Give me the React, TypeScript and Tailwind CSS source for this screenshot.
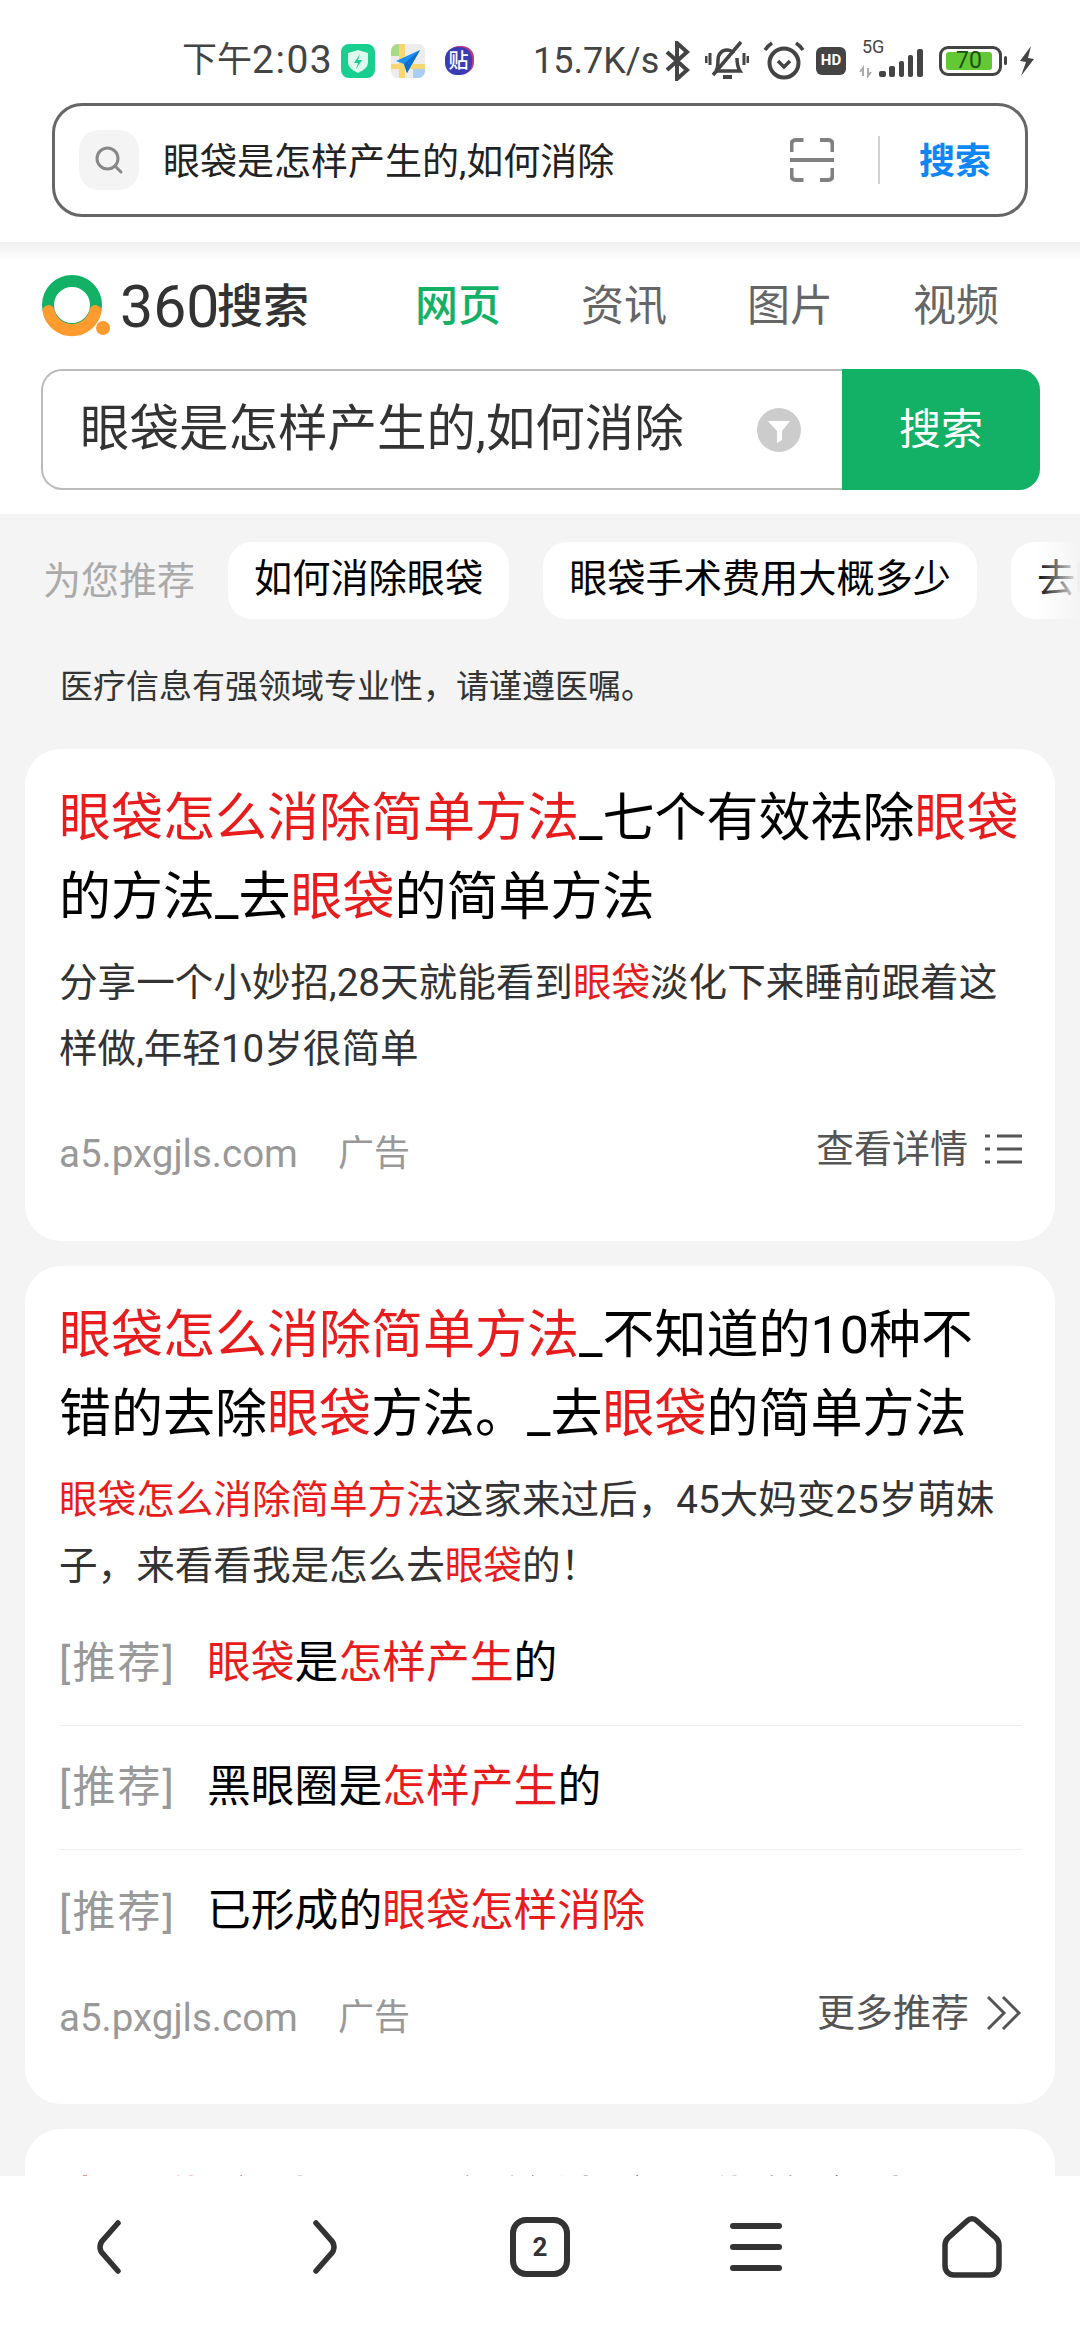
import type { ReactNode } from "react";

const font = { fontFamily: 'Roboto, "Noto Sans CJK SC", sans-serif' };

function R({ children }: { children: ReactNode }) {
  return <span className="text-[#e81c1c]">{children}</span>;
}

function StatusBar() {
  return (
    <div className="flex h-[103px] items-center pl-[182px] pt-[18px] text-[#444]">
      <span className="flex w-[149px] items-center leading-none whitespace-nowrap">
        <span className="text-[35px]">下午</span>
        <span className="text-[39px] tracking-[1.500px]">2:03</span>
      </span>
      <svg className="ml-[10px]" width="34" height="34" viewBox="0 0 34 34">
        <rect width="34" height="34" rx="8" fill="#19cf8f" />
        <path d="M17 6l10 3v9c0 5-4 8-10 11C11 26 7 23 7 18V9z" fill="#dff8ef" />
        <path d="M19 10l-6 9h4l-2 6 6-9h-4z" fill="#19cf8f" />
      </svg>
      <svg className="ml-[16px]" width="34" height="34" viewBox="0 0 34 34">
        <rect width="34" height="34" rx="7" fill="#ececec" />
        <path d="M0 7a7 7 0 0 1 7-7h6v12H0z" fill="#a6dc84" />
        <rect x="8" width="6" height="34" fill="#f7d774" />
        <rect y="20" width="34" height="5" fill="#f7d774" />
        <path d="M22 25h12v2a7 7 0 0 1-7 7h-5z" fill="#a9cdf5" />
        <path d="M29 6L5 17l8 3 3 9z" fill="#1c8ff0" />
        <path d="M29 6L13 20l3 9z" fill="#0a6fd0" />
      </svg>
      <span className="relative ml-[20px] flex h-[28px] w-[27px] items-center justify-center rounded-[12px] bg-[#3b3bb5] text-[20px] leading-none font-medium text-white shadow-[2px_-1px_0_#c2387e]">
        贴
      </span>
      <span className="ml-[61px] w-[124px] text-[36px] leading-none whitespace-nowrap">15.7K/s</span>
      <svg className="ml-[7px]" width="26" height="40" viewBox="0 0 26 40" fill="none" stroke="#444" strokeWidth="4">
        <path d="M3 11l20 18-10 9V2l10 9L3 29" />
      </svg>
      <svg className="ml-[15px]" width="44" height="42" viewBox="0 0 44 42" fill="none" stroke="#444" strokeWidth="3.5">
        <path d="M11 31c2-3 2-6 2-11 0-6 4-10 9-10 3 0 5 1 7 3M32 18c0 6 1 10 3 13H11" />
        <path d="M8 35L36 2" />
        <path d="M18 37h9" strokeWidth="4" />
        <path d="M1 16v7M5 13v12M39 13v12M43 16v7" strokeWidth="3" />
      </svg>
      <svg className="ml-[14px]" width="42" height="42" viewBox="0 0 42 42" fill="none" stroke="#444">
        <circle cx="21" cy="23" r="14.5" strokeWidth="4" />
        <path d="M15 21l6 6 6-6" strokeWidth="3.5" />
        <path d="M2 10c2-3 4-5 7-7M40 10c-2-3-4-5-7-7" strokeWidth="3.5" />
      </svg>
      <span className="ml-[11px] flex h-[28px] w-[30px] items-center justify-center rounded-[6px] bg-[#444] text-[15px] leading-none font-bold text-white">
        HD
      </span>
      <span className="relative ml-[13px] h-[34px] w-[65px]">
        <span className="absolute top-[-6px] left-[3px] text-[18px] leading-none">5G</span>
        <svg className="absolute top-0 left-0" width="65" height="34" viewBox="0 0 65 34">
          <path d="M4 32v-8l-3 4M9 24v8l3-4" fill="none" stroke="#aaa" strokeWidth="2" />
          <rect x="20" y="27" width="7" height="6" rx="2" fill="#444" />
          <rect x="30" y="22" width="6" height="11" rx="2" fill="#444" />
          <rect x="40" y="17" width="5" height="16" rx="2" fill="#444" />
          <rect x="49" y="11" width="5" height="22" rx="2" fill="#444" />
          <rect x="58" y="5" width="6" height="28" rx="2" fill="#444" />
        </svg>
      </span>
      <span className="relative ml-[15px] flex h-[30px] w-[63px] items-center rounded-[9px] border-[3px] border-[#444] pl-[4px]">
        <span className="flex h-[18px] w-[46px] items-center justify-center rounded-[3px] bg-[#62c934] text-[23px] leading-none text-[#1f4f10]">
          70
        </span>
      </span>
      <span className="ml-[2px] h-[9px] w-[3px] rounded-[2px] bg-[#444]" />
      <svg className="ml-[12px]" width="16" height="30" viewBox="0 0 16 30">
        <path d="M12 0L1 15l6 1-5 14L15 13l-6-1z" fill="#444" />
      </svg>
    </div>
  );
}

function BrowserBar() {
  return (
    <div className="h-[242px] bg-white">
      <StatusBar />
      <div className="mx-[52px] flex h-[114px] items-center rounded-[30px] border-[3px] border-[#666] pl-[24px]">
        <span className="flex h-[60px] w-[60px] items-center justify-center rounded-[20px] bg-[#f4f4f4]">
          <svg width="30" height="30" viewBox="0 0 30 30" fill="none" stroke="#888" strokeWidth="3">
            <circle cx="13.5" cy="13.5" r="10.5" />
            <path d="M21 21l6 6" strokeLinecap="round" />
          </svg>
        </span>
        <span className="ml-[24px] w-[627px] pt-[4px] text-[37px] leading-none text-[#222]">眼袋是怎样产生的,如何消除</span>
        <svg width="44" height="44" viewBox="0 0 44 44" fill="none" stroke="#808080" strokeWidth="4">
          <path d="M1.5 14V6a4 4 0 0 1 4-4h8M30 2h8.500a4 4 0 0 1 4 4v8M1.500 30v8a4 4 0 0 0 4 4h8M30 42h8.500a4 4 0 0 0 4-4v-8" />
          <path d="M0 22h44" />
        </svg>
        <span className="ml-[44px] h-[48px] w-[2px] bg-[#d0d0d0]" />
        <span className="ml-[39px] pt-[3px] text-[36px] leading-none font-bold text-[#0f86f5]">搜索</span>
      </div>
    </div>
  );
}

function Logo() {
  return (
    <div className="flex items-center">
      <svg width="72" height="64" viewBox="0 0 72 64" fill="none">
        <circle cx="31" cy="31" r="24" stroke="#13b166" strokeWidth="12" />
        <path d="M7.500 37a24 24 0 0 0 47 0" stroke="#ff9b2f" strokeWidth="12" strokeLinecap="round" />
        <circle cx="62" cy="54" r="7" fill="#ff9b2f" />
      </svg>
      <span className="ml-[7px] w-[97px] text-[59px] leading-none text-[#333]">360</span>
      <span className="text-[46px] leading-none font-medium text-[#333]">搜索</span>
    </div>
  );
}

function PageHeader() {
  return (
    <div className="h-[272px] bg-white">
      <div className="h-[18px] bg-gradient-to-b from-[#efefef] to-white" />
      <div className="flex h-[90px] items-center pt-[2px] pl-[41px]">
        <Logo />
        <div className="ml-[106px] flex gap-[80px] text-[43px] leading-none text-[#666]">
          <span className="font-medium text-[#13b166]">网页</span>
          <span>资讯</span>
          <span>图片</span>
          <span>视频</span>
        </div>
      </div>
      <div className="mt-[19px] mr-[40px] ml-[41px] flex h-[121px]">
        <div className="flex flex-1 items-center rounded-l-[21px] border-[2px] border-r-0 border-[#bbb] pl-[37px]">
          <span className="w-[677px] text-[49.500px] leading-none whitespace-nowrap text-[#333]">眼袋是怎样产生的,如何消除</span>
          <svg width="44" height="44" viewBox="0 0 44 44">
            <circle cx="22" cy="22" r="22" fill="#ccc" />
            <path d="M11 13h22l-8 10v9l-5 3V23z" fill="#fff" />
          </svg>
        </div>
        <div className="flex w-[198px] items-center justify-center rounded-r-[21px] bg-[#12b165] text-[42px] leading-none text-white">
          搜索
        </div>
      </div>
    </div>
  );
}

function Recommend() {
  const chips = ["如何消除眼袋", "眼袋手术费用大概多少", "去眼袋最有效方法"];
  return (
    <div className="relative mt-[28px] flex h-[77px] items-center overflow-hidden pl-[43px]">
      <span className="w-[185px] shrink-0 text-[38px] leading-none whitespace-nowrap text-[#aaa]">为您推荐</span>
      <div className="flex gap-[34px]">
        {chips.map((c) => (
          <span
            key={c}
            className="flex h-[77px] shrink-0 items-center rounded-[24px] bg-white px-[26px] pb-[2px] text-[38.200px] leading-none whitespace-nowrap text-black"
          >
            {c}
          </span>
        ))}
      </div>
      <div className="absolute top-0 right-0 h-full w-[44px] bg-gradient-to-r from-transparent to-[#f4f4f4]" />
    </div>
  );
}

function MetaRow({ label, icon }: { label: string; icon: ReactNode }) {
  return (
    <div className="flex h-[76px] items-center justify-between">
      <div className="flex items-center leading-none text-[#999]">
        <span className="w-[279px] text-[38.500px] whitespace-nowrap">a5.pxgjls.com</span>
        <span className="text-[36px]">广告</span>
      </div>
      <div className="flex items-center pb-[10px] text-[38px] leading-none text-[#555]">
        <span>{label}</span>
        {icon}
      </div>
    </div>
  );
}

function Card({ children, className = "" }: { children: ReactNode; className?: string }) {
  return (
    <div className={`mx-[25px] rounded-[36px] bg-white pt-[30px] pr-[33px] pl-[34px] ${className}`}>{children}</div>
  );
}

function Title({ children }: { children: ReactNode }) {
  return <h3 className="mr-[-3px] text-[52px] leading-[79px] font-normal text-black">{children}</h3>;
}

function Desc({ children }: { children: ReactNode }) {
  return <p className="mt-[13px] text-[38.600px] leading-[66px] text-[#333]">{children}</p>;
}

function RecRow({ children, last }: { children: ReactNode; last?: boolean }) {
  return (
    <div className={`flex h-[124px] items-center ${last ? "" : "border-b-[1px] border-[#eee]"}`}>
      <span className="w-[148px] text-[43px] leading-none tracking-[2px] whitespace-nowrap text-[#999]">[推荐]</span>
      <span className="text-[43.800px] leading-none text-black">{children}</span>
    </div>
  );
}

function BottomNav() {
  return (
    <nav className="grid h-[164px] grid-cols-5 items-center bg-white pb-[22px] text-[#333]">
      <div className="flex justify-center">
        <svg width="28" height="54" viewBox="0 0 28 54" fill="none" stroke="currentColor" strokeWidth="5.500" strokeLinecap="round">
          <path d="M24 3L9 20c-4 4-4 10 0 14l15 17" />
        </svg>
      </div>
      <div className="flex justify-center pl-[3px]">
        <svg width="28" height="54" viewBox="0 0 28 54" fill="none" stroke="currentColor" strokeWidth="5.500" strokeLinecap="round">
          <path d="M4 3l15 17c4 4 4 10 0 14L4 51" />
        </svg>
      </div>
      <div className="flex justify-center">
        <span className="flex h-[60px] w-[60px] items-center justify-center rounded-[16px] border-[6px] border-[#333] text-[26px] leading-none font-bold">
          2
        </span>
      </div>
      <div className="flex flex-col items-center gap-[15px]">
        <span className="h-[6px] w-[52px] rounded-full bg-[#333]" />
        <span className="h-[6px] w-[52px] rounded-full bg-[#333]" />
        <span className="h-[6px] w-[52px] rounded-full bg-[#333]" />
      </div>
      <div className="flex justify-center">
        <svg width="60" height="62" viewBox="0 0 60 62" fill="none" stroke="currentColor" strokeWidth="5.500" strokeLinejoin="round">
          <path d="M25 5c3-3 7-3 10 0l19 17c2 2 3 4 3 7v20c0 6-3 10-9 10H12c-6 0-9-4-9-10V29c0-3 1-5 3-7z" />
        </svg>
      </div>
    </nav>
  );
}

export default function App() {
  return (
    <div className="flex h-[2340px] w-[1080px] flex-col overflow-hidden bg-[#f4f4f4]" style={font}>
      <BrowserBar />
      <main className="min-h-0 flex-1 overflow-hidden">
        <PageHeader />
        <Recommend />
        <p className="mt-[44px] h-[48px] pl-[60px] text-[33px] leading-[48px] text-[#333]">
          医疗信息有强领域专业性，请谨遵医嘱。
        </p>
        <div className="mt-[38px] flex flex-col gap-[25px]">
          <Card className="pb-[49px]">
            <Title>
              <R>眼袋怎么消除简单方法</R>_七个有效祛除<R>眼袋</R>
              <br />
              的方法_去<R>眼袋</R>的简单方法
            </Title>
            <Desc>
              分享一个小妙招,28天就能看到<R>眼袋</R>淡化下来睡前跟着这样做,年轻10岁很简单
            </Desc>
            <div className="mt-[34px]">
              <MetaRow
                label="查看详情"
                icon={
                  <svg className="ml-[17px]" width="37" height="32" viewBox="0 0 37 32" stroke="#555" strokeWidth="3">
                    <path d="M0 3h5M12 3h25M0 16h5M12 16h25M0 29h5M12 29h25" />
                  </svg>
                }
              />
            </div>
          </Card>
          <Card className="pb-[48px]">
            <Title>
              <R>眼袋怎么消除简单方法</R>_不知道的10种不
              <br />
              错的去除<R>眼袋</R>方法。_去<R>眼袋</R>的简单方法
            </Title>
            <Desc>
              <R>眼袋怎么消除简单方法</R>这家来过后，45大妈变25岁萌妹子，来看看我是怎么去<R>眼袋</R>的！
            </Desc>
            <div className="pt-[3px]">
              <RecRow>
                <R>眼袋</R>是<R>怎样产生</R>的
              </RecRow>
              <RecRow>
                黑眼圈是<R>怎样产生</R>的
              </RecRow>
              <RecRow last>
                已形成的<R>眼袋怎样消除</R>
              </RecRow>
            </div>
            <div className="mt-[6px]">
              <MetaRow
                label="更多推荐"
                icon={
                  <svg className="ml-[17px]" width="36" height="36" viewBox="0 0 36 36" fill="none" stroke="#555" strokeWidth="3">
                    <path d="M2 2l16 16L2 34M17 2l16 16-16 16" />
                  </svg>
                }
              />
            </div>
          </Card>
          <Card>
            <div className="pt-[4px]">
              <Title>
                <R>去眼袋方法</R>_七个有效祛除<R>眼袋</R>的方法
              </Title>
            </div>
          </Card>
        </div>
      </main>
      <BottomNav />
    </div>
  );
}
